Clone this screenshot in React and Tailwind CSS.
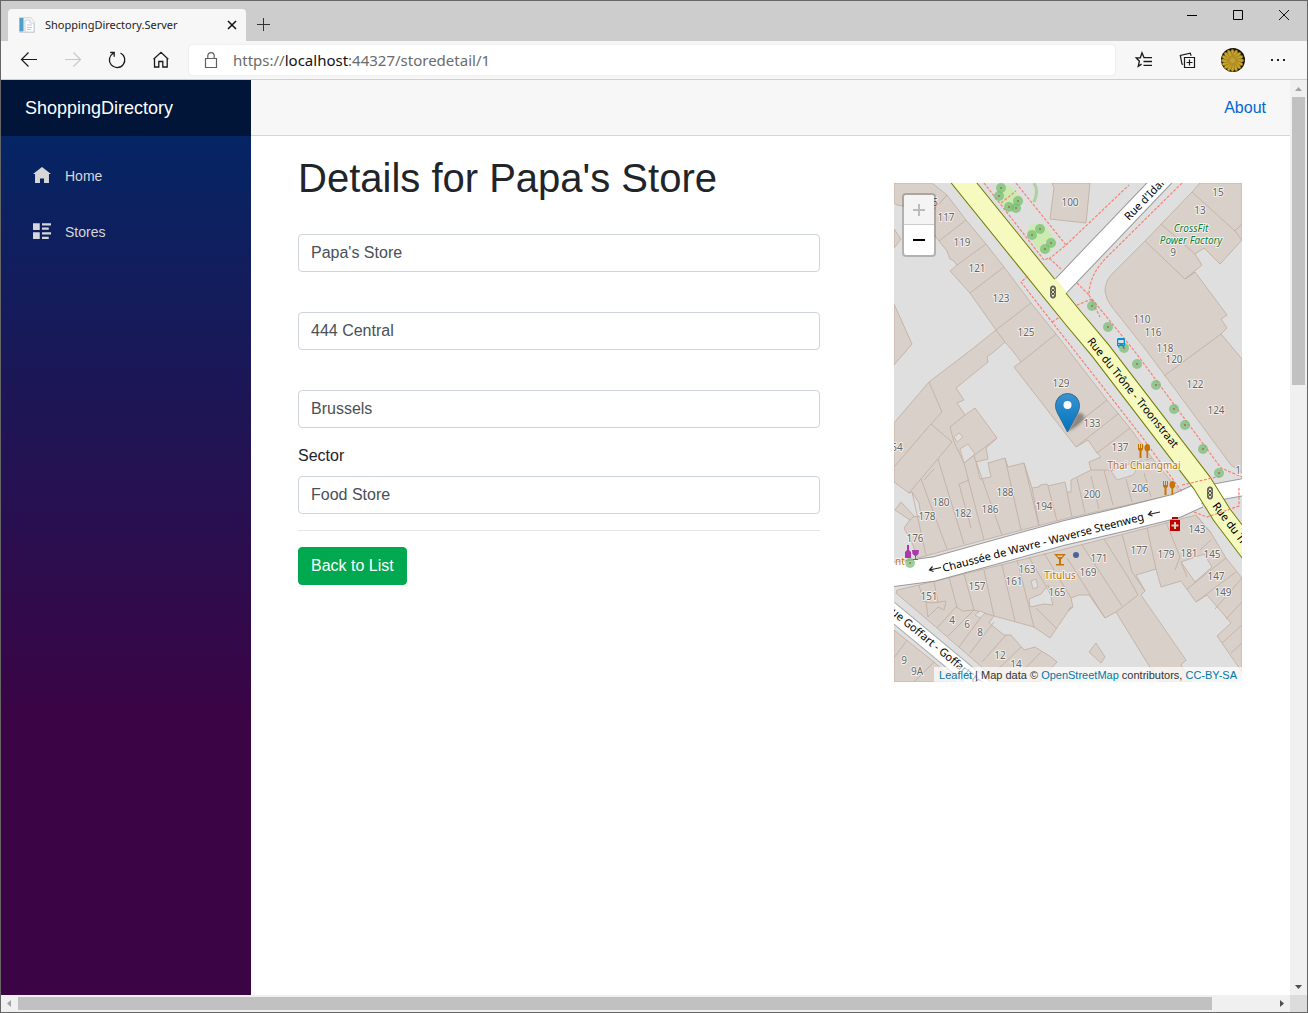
import React from "react";

const outline = {
  fill: "none",
  stroke: "#1a1a1a",
  strokeWidth: 1.2,
};

function BackIcon() {
  return (
    <svg width="20" height="20" viewBox="0 0 20 20" {...outline}>
      <path d="M18 9.5H2.5M9.5 2.5l-7 7 7 7" />
    </svg>
  );
}

function ForwardIcon() {
  return (
    <svg width="20" height="20" viewBox="0 0 20 20" {...outline} stroke="#c8c8c8">
      <path d="M2 9.5h15.500M10.500 2.500l7 7-7 7" />
    </svg>
  );
}

function ReloadIcon() {
  return (
    <svg width="20" height="20" viewBox="0 0 20 20" {...outline} strokeWidth="1.3">
      <path d="M13.500 3A7.700 7.700 0 1 1 6.300 3.200M3.200 2.500h4v4.200" />
    </svg>
  );
}

function HomeIcon() {
  return (
    <svg width="20" height="20" viewBox="0 0 20 20" {...outline} strokeWidth="1.3">
      <path d="M3.500 8.600V17h4.300v-5.500h4V17h4.400V8.600M2.500 9.300L10 2.300l7.300 7" />
    </svg>
  );
}

function LockIcon() {
  return (
    <svg width="16" height="18" viewBox="0 0 16 18" fill="none" stroke="#5f5f5f" strokeWidth="1.2">
      <path d="M2.500 7.500h11v9h-11zM4.800 7.500V4.800a3.200 3.200 0 0 1 6.400 0v2.700" />
    </svg>
  );
}

function FavoritesIcon() {
  return (
    <svg width="20" height="20" viewBox="0 0 20 20" {...outline} strokeWidth="1.3">
      <path d="M11.500 7.600H10L8 2.800 6.300 7.800H2.200l3.200 3.400-1.200 5.200 3.400-2.300M10.300 7.700H18M9.500 11.500H18M9.500 15.300H18" />
    </svg>
  );
}

function CollectionsIcon() {
  return (
    <svg width="20" height="20" viewBox="0 0 20 20" {...outline} strokeWidth="1.2">
      <path d="M6.500 7.500h10v10h-10zM11.500 9.500v6M8.500 12.500h6M5.200 14.300L4 14 2.300 5.400l10-2.300.8 2.600" />
    </svg>
  );
}

const petals = Array.from({ length: 16 }, (_, i) => i * 22.5);

function Avatar() {
  return (
    <svg width="24" height="24" viewBox="0 0 24 24">
      <circle cx="12" cy="12" r="12" fill="#151007" />
      <g transform="translate(11.500 12.500)">
        {petals.map((a) => (
          <ellipse key={a} cx="0" cy="-6.500" rx="1.900" ry="4.800" fill="#c8a52a" stroke="#7d6316" strokeWidth=".5" transform={`rotate(${a})`} />
        ))}
        <circle r="5" fill="#b28f22" />
        <circle r="2.500" fill="#c4a038" />
      </g>
    </svg>
  );
}

function PageIcon() {
  return (
    <svg width="16" height="16" viewBox="0 0 16 16">
      <path d="M.5.500h11l4 4v11H.5z" fill="#f4f6f8" stroke="#d4d9de" />
      <path d="M.5 1h4v13.500h-4z" fill="#4f9fca" />
      <path d="M6 3h5v3h4v9H6z" fill="#fff" stroke="#c3c9cf" strokeWidth=".8" />
      <path d="M8 8h5M8 10.500h5M8 12.500h4" stroke="#c3c9cf" />
    </svg>
  );
}

function TitleBar() {
  return (
    <div className="flex h-10 items-end bg-[#cdcdcd] pl-[7px]">
      <div className="flex h-8 w-[238px] items-center rounded-t bg-[#f7f7f7] pr-1.5 pl-[11px]">
        <PageIcon />
        <span className="ml-2.5 flex-1 font-['Noto_Sans'] text-[11px] whitespace-nowrap text-[#222]">
          ShoppingDirectory.Server
        </span>
        <button aria-label="Close tab" className="flex size-4 items-center justify-center">
          <svg width="10" height="10" viewBox="0 0 10 10" stroke="#111" strokeWidth="1.5">
            <path d="M1 1l8 8M9 1L1 9" />
          </svg>
        </button>
      </div>
      <button aria-label="New tab" className="mb-2.5 ml-[11px]">
        <svg width="14" height="14" viewBox="0 0 14 14" stroke="#333">
          <path d="M0 7.500h13M6.500 1v13" />
        </svg>
      </button>
      <div className="flex-1" />
      <div className="flex h-full items-start">
        <button aria-label="Minimize" className="flex h-7 w-[46px] items-center justify-center">
          <svg width="12" height="12" viewBox="0 0 12 12" stroke="#000">
            <path d="M1 6.500h10" />
          </svg>
        </button>
        <button aria-label="Maximize" className="flex h-7 w-[46px] items-center justify-center">
          <svg width="12" height="12" viewBox="0 0 12 12" stroke="#000" fill="none">
            <path d="M1.500 1.500h9v9h-9z" />
          </svg>
        </button>
        <button aria-label="Close" className="flex h-7 w-[46px] items-center justify-center">
          <svg width="12" height="12" viewBox="0 0 12 12" stroke="#111">
            <path d="M1 1l10 10M11 1L1 11" />
          </svg>
        </button>
      </div>
    </div>
  );
}

function ToolButton({ label, children }) {
  return (
    <button aria-label={label} className="flex h-8 w-11 items-center justify-center">
      {children}
    </button>
  );
}

function Toolbar() {
  return (
    <div className="flex h-[39px] items-center border-b border-[#cfcfcf] bg-[#f7f7f7] pr-[7px] pl-1.5">
      <ToolButton label="Back"><BackIcon /></ToolButton>
      <ToolButton label="Forward"><ForwardIcon /></ToolButton>
      <ToolButton label="Refresh"><ReloadIcon /></ToolButton>
      <ToolButton label="Home"><HomeIcon /></ToolButton>
      <div className="ml-1.5 flex h-[30px] flex-1 items-center rounded bg-white pl-3.5 shadow-[0_0_3px_rgba(0,0,0,0.08)]">
        <LockIcon />
        <div className="ml-3.5 font-['Noto_Sans'] text-[15px] whitespace-nowrap text-[#6b6b6b]">
          https://<span className="text-[#111]">localhost</span>:44327/storedetail/1
        </div>
      </div>
      <div className="ml-[7px] flex items-center">
        <ToolButton label="Favorites"><FavoritesIcon /></ToolButton>
        <ToolButton label="Collections"><CollectionsIcon /></ToolButton>
        <button aria-label="Profile" className="flex h-8 w-[46px] items-center justify-center"><Avatar /></button>
        <ToolButton label="More">
          <svg width="16" height="4" viewBox="0 0 16 4" fill="#222">
            <path d="M1 1h2v2H1zM7 1h2v2H7zM13 1h2v2h-2z" />
          </svg>
        </ToolButton>
      </div>
    </div>
  );
}

function Sidebar() {
  return (
    <aside className="flex w-[250px] shrink-0 flex-col bg-[linear-gradient(180deg,rgb(0,40,103)_0%,#3b0445_70%)]">
      <div className="flex h-14 items-center bg-[#001538] pl-6">
        <a href="#" className="text-lg text-white">ShoppingDirectory</a>
      </div>
      <nav className="flex flex-col gap-4 px-4 pt-5 text-sm text-[#d7d7d7]">
        <a href="#home" className="flex h-10 items-center pl-4">
          <svg width="18" height="18" viewBox="0 0 8 8" fill="currentColor">
            <path d="M4 0L0 3.100h.9v4h2.200v-2h1.800v2h2.200v-4H8z" />
          </svg>
          <span className="ml-3.5">Home</span>
        </a>
        <a href="#stores" className="flex h-10 items-center pl-4">
          <svg width="18" height="18" viewBox="0 0 8 8" fill="currentColor">
            <path d="M0 .1v3h3v-3zM4 .1v1h4v-1zM4 2v1h3V2zM0 4.100v3h3v-3zM4 4.100v1h4v-1zM4 6.100v1h3v-1z" />
          </svg>
          <span className="ml-3.5">Stores</span>
        </a>
      </nav>
    </aside>
  );
}

const houseNumbers = [
  ["100", 176, 20], ["15", 324, 10], ["13", 306, 28], ["5", 41, 20], ["117", 52, 35],
  ["119", 68, 60], ["121", 83, 86], ["123", 107, 116], ["125", 132, 150], ["9", 279, 70],
  ["110", 248, 137], ["116", 259, 150], ["118", 271, 166], ["120", 280, 177], ["122", 301, 202],
  ["124", 322, 228], ["129", 167, 201], ["133", 198, 241], ["137", 226, 265], ["54", 3, 265],
  ["180", 47, 320], ["178", 33, 334], ["182", 69, 331], ["188", 111, 310], ["186", 96, 327],
  ["194", 150, 324], ["200", 198, 312], ["206", 246, 306], ["176", 21, 356], ["151", 35, 414],
  ["157", 83, 404], ["163", 133, 387], ["161", 120, 399], ["165", 163, 410], ["171", 205, 376],
  ["169", 194, 390], ["177", 245, 368], ["179", 272, 372], ["181", 295, 371], ["145", 318, 372],
  ["143", 303, 347], ["147", 322, 394], ["149", 329, 410], ["4", 58, 438], ["6", 73, 442],
  ["8", 86, 450], ["12", 106, 473], ["14", 122, 482], ["9", 10, 478], ["9A", 23, 489],
  ["1", 344, 288],
];

const trees = [
  [107, 5], [105, 13], [124, 18], [115, 24], [122, 25], [146, 46], [138, 52], [157, 60],
  [151, 66], [198, 123], [214, 144], [230, 165], [243, 181], [262, 202], [280, 226],
  [291, 242], [309, 266], [325, 290], [16, 380],
];

const halo = { stroke: "#fff", strokeWidth: 2, strokeOpacity: 0.7, paintOrder: "stroke", strokeLinejoin: "round" };

function Fork({ x, y }) {
  return (
    <g transform={`translate(${x} ${y})`} fill="#c77400">
      <path d="M0 0h1v4h1V0h1v4h1V0h1v5q0 1-1.500 2v7h-2V7Q0 6 0 5z" />
      <ellipse cx="9.300" cy="3.700" rx="2.800" ry="3.800" />
      <path d="M8.500 6h1.600v8H8.500z" />
    </g>
  );
}

function Signal({ x, y }) {
  return (
    <g transform={`translate(${x} ${y})`} fill="#f7fabf" stroke="#444" strokeWidth="1">
      <rect x="-2.300" y="-6" width="4.600" height="12" rx="2" />
      <circle cy="-3.700" r="1.600" />
      <circle r="1.600" />
      <circle cy="3.700" r="1.600" />
    </g>
  );
}

function StreetMap() {
  return (
    <svg
      role="img"
      aria-label="Street map"
      className="block h-full w-full"
      viewBox="0 0 348 499"
      preserveAspectRatio="xMinYMin slice"
      fontFamily="'Noto Sans', sans-serif"
    >
      <rect width="348" height="499" fill="#dfdfdf" />
      {/* buildings */}
      <g fill="#d9d0c9" stroke="#c3b0a5" strokeWidth=".9" fillRule="evenodd">
        <path d="M0 0H38L53 12 39 28 3 22 0 20zM0 46L7 56 0 65zM0 121L18 161 0 182z" />
        <path d="M53 12L72 37 92 61 110 84 137 120 162 151 213 217 236 245 258 275 287 310 170 336 90 357 24 375 18 360 10 345 18 334 27 333 25 320 18 309 15 310 0 299V240L35 199 77 167 102 147 76 110 56 88 63 82 60 78 56 76 53 68 45 58 37 48V30zM111 159L118 167 127 179 120 184 182 264 194 257 203 270 207 274 195 279 197 287 177 297 177 309 173 309 171 299 154 303 153 301 146 302 145 304 138 305 130 280 114 284 111 275 94 280 97 294 86 296 82 279 94 276 92 265 103 255 81 225 71 232 63 220 70 217 62 205 94 179 93 174 102 167z" />
        <path d="M158 0L160 5 156 36 192 40 196 0z" />
        <path d="M306 0L298 9 251 58 220 89Q211 97 211 108 212 117 218 124L252 167 337 282 348 290V176L327 151 333 145 327 136 333 132 301 89 291 96 308 82 301 71 310 65 326 81 348 57V0z" />
        <path d="M3 407L25 402 135 375 190 361 210 356 253 345 302 332 317 350 332 375 348 395V489L328 460 323 453 337 440 313 412 302 419 287 398 267 404 262 386 242 392 251 408 247 412 292 477 287 482 292 490 297 499H265L222 429 211 435 195 412 185 412 177 415 179 424 174 428 177 424 156 455 140 444 100 433 95 440 110 452 117 452 130 467 141 464 157 474 163 479 145 499H105L43 445 2 410zM287 379L310 371 318 384 301 399zM135 416L147 411 154 402 159 422 150 421 136 424z" />
        <path d="M202 460L211 474 207 480 195 469zM0 447L40 479 62 499H0zM1 327L7 319 20 333 16 337z" />
        <path fill="none" d="M72 37L45 58M92 61L63 82M110 84L76 110M137 120L102 147 111 159M162 151L127 179M35 199L48 229 37 241 0 284M37 241L58 259 15 310M71 232L56 244 60 259 70 280 103 255M27 296L53 366M44 276L70 361M70 280L90 357M65 301L75 297M80 273L108 352M111 275L127 347M130 280L145 343M138 305L145 343M154 303L163 338M173 309L178 334M183 295L191 330M197 293L205 326M210 287L219 322M232 296L238 319M250 290L257 314M213 217L175 247M225 230L182 264M236 245L203 270M197 287L217 287 258 275M30 297L40 286M65 301L77 345M18 309L32 372" />
        <path fill="none" d="M298 9L341 48 348 41M341 48L348 57M267 41L301 71M251 58L291 96 301 89M327 151L270 193M25 402L29 417M40 398L44 420M55 394L63 424M70 391L80 427M90 387L100 433M108 382L121 438M123 377L140 444M142 425L163 446M135 374L157 412M150 370L177 415M173 375L211 435M188 362L228 423M210 356L234 394 244 412 222 429M228 351L238 389 251 408M253 345L262 386M272 339L286 374 281 387M287 379L293 394M332 375L293 406M342 389L302 419M348 395L321 426M317 357L306 367M348 419L332 436M348 442L328 460M348 460L337 470M62 424L43 445M62 424L69 428 80 427 100 433M80 427L54 453M90 430L65 464M100 439L76 470M112 452L88 479M127 464L100 490M147 469L118 499M13 457L0 475M40 479L20 499M28 418L38 420 52 418 50 427 44 424 34 434M302 332L317 350M34 434L32 418" />
      </g>
      <g fill="#dfdfdf" stroke="#c3b0a5" strokeWidth=".8">
        <path d="M60 254L65 250 69 254 63 259zM66 266L74 261 81 271 70 280zM217 288L223 297 239 292 243 286 238 280zM137 398L142 396 144 404 139 406zM81 432L86 428 91 430 86 435z" />
      </g>
      {/* parks */}
      <path d="M103 0L118 4 130 18 120 30 108 22zM133 50Q135 38 148 41 156 46 162 59 160 70 149 71 141 63 133 50z" fill="#cdebb0" />
      <path d="M140 0Q145 8 140 19" fill="none" stroke="#add19e" strokeWidth="3" />
      {/* roads */}
      <g fill="none" strokeLinejoin="round">
        <path d="M-5 426L100 513" stroke="#aaa" strokeWidth="18" />
        <path d="M-5 426L100 513" stroke="#fff" strokeWidth="16" />
        <path d="M164 106L272 -7" stroke="#999" strokeWidth="19" />
        <path d="M-5 392L40 386 170 350 230 336 282 323 304 313" stroke="#999" strokeWidth="25" />
        <path d="M296 314L355 303" stroke="#999" strokeWidth="18" />
        <path d="M164 106L272 -7" stroke="#fff" strokeWidth="17" />
        <path d="M-5 392L40 386 170 350 230 336 282 323 304 313" stroke="#fff" strokeWidth="23" />
        <path d="M296 314L355 303" stroke="#fff" strokeWidth="16" />
        <path d="M62 -10L180 136 206 167 308 300 328 332 360 374" stroke="#707d05" strokeWidth="21" />
        <path d="M62 -10L180 136 206 167 308 300 328 332 360 374" stroke="#f7fabf" strokeWidth="19" />
        <path d="M161 96L172 110" stroke="#f7fabf" strokeWidth="2.500" />
      </g>
      {/* footpaths */}
      <path
        fill="none"
        stroke="#fa8072"
        strokeWidth="1.200"
        strokeDasharray="3 1.500"
        d="M90 0L150 77 155 75 167 86M122 0L172 62 155 76M107 20L122 8M172 62L235 2M134 93L127 99 158 139 180 167 248 254 288 309M158 139L166 134M288 0L213 74Q195 92 195 112L206 134M183 100L195 112M198 116L183 122M198 116L242 170 327 285 348 294M288 302L327 293M300 329L313 334 345 323V305"
      />
      {trees.map(([x, y]) => (
        <g key={`${x}-${y}`}>
          <circle cx={x} cy={y} r="5" fill="#74bb74" fillOpacity=".7" />
          <circle cx={x} cy={y} r=".9" fill="#a5683a" />
        </g>
      ))}
      {/* points of interest */}
      <Signal x={159} y={109} />
      <Signal x={316} y={310} />
      <Fork x={244} y={261} />
      <Fork x={269} y={298} />
      <path d="M224 155h6l1 1v7h-1v1.500h-1.500V163h-3v1.500H224V163h-1v-7zM224.300 157v3h5.400v-3zM224.300 161h1v1h-1zM228.700 161h1v1h-1z" fill="#0092da" fillRule="evenodd" />
      <path d="M160 371h12l-5 5.500v4.500h3v1.500h-8V381h3v-4.500zM163 372.500l1 1.500h4l1-1.500z" fill="#c77400" />
      <path d="M11 375v-6l2-2v-5h2v5l2 2v6zM18 367h7l-.5 4-2.500 2v3h2v1h-5v-1h2v-3l-2.500-2z" fill="#ac39ac" />
      <circle cx="182" cy="372" r="3" fill="#4863a0" />
      <path d="M278 334h6v2h-6zM276 337h10v11h-10zM280 339v2.500h-2.500v2H280v2.500h2v-2.500h2.500v-2H282V339z" fill="#bf0000" fillRule="evenodd" />
      <path d="M47 384.500L35.500 387m3-3.500l-3 3.500 4 1.500M266 329l-11.500 2.500m3-3.500l-3 3.500 4 1.500" fill="none" stroke="#222" strokeWidth="1.200" />
      {/* labels */}
      <g fontSize="10" fill="#666" textAnchor="middle" {...halo}>
        {houseNumbers.map(([label, x, y]) => (
          <text key={`${label}-${x}`} x={x} y={y + 3}>{label}</text>
        ))}
      </g>
      <g fontSize="10" fill="#0f7f3a" fontStyle="italic" textAnchor="middle" {...halo}>
        <text x="297" y="49">CrossFit</text>
        <text x="297" y="61">Power Factory</text>
      </g>
      <g fontSize="10" fill="#c77400" textAnchor="middle" {...halo}>
        <text x="250" y="286">Thai Chiangmai</text>
        <text x="166" y="396">Titulus</text>
        <text x="6" y="382">nt</text>
      </g>
      <g fontSize="11" fill="#000" textAnchor="middle">
        <text transform="translate(236 212) rotate(51)">Rue du Trône - Troonstraat</text>
        <text transform="translate(150 363) rotate(-14.500)">Chaussée de Wavre - Waverse Steenweg</text>
        <text textAnchor="start" transform="translate(235 38) rotate(-46)">Rue d'Idalie</text>
        <text textAnchor="start" transform="translate(318 323) rotate(53)">Rue du Trône</text>
        <text textAnchor="start" transform="translate(-9 426) rotate(39.500)">Rue Goffart - Goffartstraat</text>
      </g>
      {/* marker */}
      <defs>
        <linearGradient id="pin" x1="0" y1="0" x2="0" y2="1">
          <stop offset="0" stopColor="#3a93cf" />
          <stop offset="1" stopColor="#0073c0" />
        </linearGradient>
        <filter id="soft" x="-50%" y="-50%" width="200%" height="200%">
          <feGaussianBlur stdDeviation="1.500" />
        </filter>
      </defs>
      <path d="M173 249L183 230Q192 229 190 236 185 243 173 249z" fill="#000" fillOpacity=".35" filter="url(#soft)" />
      <path d="M173.500 249L163.500 230Q161.500 226.500 161.500 222.500a12 12 0 0 1 24 0Q185.500 226.500 183.500 230z" fill="url(#pin)" stroke="#2e6c97" strokeWidth="1" />
      <circle cx="173.500" cy="222" r="4" fill="#fff" />
    </svg>
  );
}

function MapPanel() {
  return (
    <div className="relative h-[499px] min-w-0 overflow-hidden">
      <StreetMap />
      <div className="absolute top-2.5 left-2 flex w-[34px] flex-col rounded border-2 border-black/20 bg-white bg-clip-padding">
        <button disabled aria-label="Zoom in" className="flex h-[30px] items-center justify-center rounded-t-sm border-b border-[#ccc] bg-[#f4f4f4]">
          <svg width="14" height="14" viewBox="0 0 14 14" stroke="#bbb" strokeWidth="2"><path d="M1 7h12M7 1v12" /></svg>
        </button>
        <button aria-label="Zoom out" className="flex h-[30px] items-center justify-center">
          <svg width="14" height="14" viewBox="0 0 14 14" stroke="#000" strokeWidth="2"><path d="M1 7h12" /></svg>
        </button>
      </div>
      <div className="absolute right-0 bottom-0 bg-white/70 px-[5px] pt-px text-[11px] leading-[14px] whitespace-nowrap text-[#333]">
        <a href="#leaflet" className="text-[#0078a8]">Leaflet</a> | Map data ©{" "}
        <a href="#osm" className="text-[#0078a8]">OpenStreetMap</a> contributors,{" "}
        <a href="#license" className="text-[#0078a8]">CC-BY-SA</a>
      </div>
    </div>
  );
}

const inputClass =
  "block h-[38px] w-full rounded border border-[#ced4da] bg-white px-3 text-base text-[#495057] outline-none";

function StoreForm() {
  return (
    <form className="min-w-0" onSubmit={(e) => e.preventDefault()}>
      <h1 className="pt-[18px] text-[40px] leading-12 text-[#212529]">Details for Papa's Store</h1>
      <div className="mt-8 flex flex-col gap-10">
        <input aria-label="Name" className={inputClass} defaultValue="Papa's Store" />
        <input aria-label="Address" className={inputClass} defaultValue="444 Central" />
        <input aria-label="City" className={inputClass} defaultValue="Brussels" />
      </div>
      <label htmlFor="sector" className="mt-4 mb-2 block text-base text-[#212529]">Sector</label>
      <input id="sector" className={inputClass} defaultValue="Food Store" />
      <hr className="my-4 border-[#e5e5e5]" />
      <button type="button" className="h-[38px] rounded border border-[#00a850] bg-[#00a850] px-3 text-base text-white">
        Back to List
      </button>
    </form>
  );
}

function Arrow({ d, color }) {
  return (
    <svg width="17" height="17" viewBox="0 0 17 17" fill={color} className="shrink-0">
      <path d={d} />
    </svg>
  );
}

export default function App() {
  return (
    <div className="flex min-h-screen flex-col border border-[#666] bg-white font-['Liberation_Sans',Arial,sans-serif]">
      <TitleBar />
      <Toolbar />
      <div className="flex flex-1">
        <Sidebar />
        <div className="min-w-0 flex-1">
          <header className="flex h-14 items-center justify-end border-b border-[#d6d5d5] bg-[#f7f7f7] pr-6">
            <a href="#about" className="text-base text-[#0366d6]">About</a>
          </header>
          <main className="grid grid-cols-[3fr_2fr] gap-[74px] pr-12 pl-[47px]">
            <StoreForm />
            <div className="pt-[47px]">
              <MapPanel />
            </div>
          </main>
        </div>
        <div className="flex w-[17px] shrink-0 flex-col bg-[#f0f0f0]">
          <Arrow d="M5 11h7L8.500 7z" color="#a3a3a3" />
          <div className="mx-0.5 flex-[288] bg-[#c1c1c1]" />
          <div className="flex-[593]" />
          <Arrow d="M5 7h7l-3.500 4z" color="#505050" />
        </div>
      </div>
      <div className="flex h-[17px] bg-[#f0f0f0]">
        <Arrow d="M10 5v7L6 8.500z" color="#a3a3a3" />
        <div className="my-0.5 flex-[1194] bg-[#c1c1c1]" />
        <div className="flex-[61]" />
        <Arrow d="M7 5v7l4-3.500z" color="#505050" />
        <div className="w-[17px] bg-[#dcdcdc]" />
      </div>
    </div>
  );
}
